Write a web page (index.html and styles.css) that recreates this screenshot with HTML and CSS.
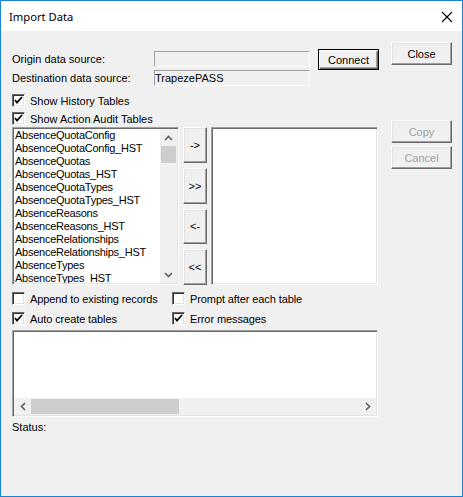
FILE: index.html
```html
<!DOCTYPE html>
<html>
<head>
<meta charset="utf-8">
<link rel="stylesheet" href="styles.css">
</head>
<body>
<div class="window">
  <div class="titlebar">
    <span class="title">Import Data</span>
    <svg class="xicon" width="12" height="12" viewBox="0 0 12 12"><path d="M1 1 L11 11 M11 1 L1 11" stroke="#000" stroke-width="1.1" fill="none"/></svg>
  </div>
  <div class="body">
    <div class="main">
      <div class="row origin">
        <span class="label">Origin data source:</span>
        <div class="field"></div>
        <button class="btn default connect">Connect</button>
      </div>
      <div class="row dest">
        <span class="label">Destination data source:</span>
        <div class="field">TrapezePASS</div>
      </div>
      <div class="check first"><span class="box"><svg width="11" height="11" viewBox="0 0 11 11"><path d="M2 5 L4 7.5 L9 2" stroke="#000" stroke-width="1.8" fill="none"/></svg></span>Show History Tables</div>
      <div class="check second"><span class="box"><svg width="11" height="11" viewBox="0 0 11 11"><path d="M2 5 L4 7.5 L9 2" stroke="#000" stroke-width="1.8" fill="none"/></svg></span>Show Action Audit Tables</div>
      <div class="lists">
        <div class="listbox">
          <ul class="items">
            <li>AbsenceQuotaConfig</li>
            <li>AbsenceQuotaConfig_HST</li>
            <li>AbsenceQuotas</li>
            <li>AbsenceQuotas_HST</li>
            <li>AbsenceQuotaTypes</li>
            <li>AbsenceQuotaTypes_HST</li>
            <li>AbsenceReasons</li>
            <li>AbsenceReasons_HST</li>
            <li>AbsenceRelationships</li>
            <li>AbsenceRelationships_HST</li>
            <li>AbsenceTypes</li>
            <li>AbsenceTypes_HST</li>
          </ul>
          <div class="vscroll">
            <div class="arrow"><svg width="9" height="6" viewBox="0 0 9 6"><path d="M1 5 L4.5 1.5 L8 5" stroke="#606060" stroke-width="1.6" fill="none"/></svg></div>
            <div class="vthumb"></div>
            <div class="vtrack"></div>
            <div class="arrow"><svg width="9" height="6" viewBox="0 0 9 6"><path d="M1 1 L4.5 4.5 L8 1" stroke="#606060" stroke-width="1.6" fill="none"/></svg></div>
          </div>
        </div>
        <div class="movers">
          <button class="btn mover">-&gt;</button>
          <button class="btn mover">&gt;&gt;</button>
          <button class="btn mover">&lt;-</button>
          <button class="btn mover">&lt;&lt;</button>
        </div>
        <div class="listbox"></div>
      </div>
      <div class="opts">
        <div class="check"><span class="box"></span>Append to existing records</div>
        <div class="check"><span class="box"></span>Prompt after each table</div>
        <div class="check"><span class="box"><svg width="11" height="11" viewBox="0 0 11 11"><path d="M2 5 L4 7.5 L9 2" stroke="#000" stroke-width="1.8" fill="none"/></svg></span>Auto create tables</div>
        <div class="check"><span class="box"><svg width="11" height="11" viewBox="0 0 11 11"><path d="M2 5 L4 7.5 L9 2" stroke="#000" stroke-width="1.8" fill="none"/></svg></span>Error messages</div>
      </div>
      <div class="log">
        <div class="logarea"></div>
        <div class="hscroll">
          <div class="harrow"><svg width="6" height="9" viewBox="0 0 6 9"><path d="M5 1 L1.5 4.5 L5 8" stroke="#606060" stroke-width="1.6" fill="none"/></svg></div>
          <div class="hthumb"></div>
          <div class="htrack"></div>
          <div class="harrow"><svg width="6" height="9" viewBox="0 0 6 9"><path d="M1 1 L4.5 4.5 L1 8" stroke="#606060" stroke-width="1.6" fill="none"/></svg></div>
        </div>
      </div>
      <div class="status">Status:</div>
    </div>
    <div class="side">
      <button class="btn sidebtn close">Close</button>
      <button class="btn sidebtn disabled copy">Copy</button>
      <button class="btn sidebtn disabled cancel">Cancel</button>
    </div>
  </div>
</div>
</body>
</html>
```
FILE: styles.css
```css
* { box-sizing: border-box; }
html, body { margin: 0; padding: 0; }
body {
  width: 463px;
  height: 497px;
  overflow: hidden;
  font-family: "Liberation Sans", Arial, sans-serif;
  font-size: 11px;
  color: #000;
}
.window {
  width: 463px;
  height: 497px;
  border: 1px solid #1883d7;
  background: #f0f0f0;
  display: flex;
  flex-direction: column;
}
.titlebar {
  height: 30px;
  background: #fff;
  display: flex;
  align-items: center;
  padding-left: 8px;
  padding-right: 9px;
  flex: none;
}
.title {
  font-family: "Noto Sans", "Open Sans", sans-serif;
  font-size: 11.2px;
  flex: 1;
  padding-top: 1px;
}
.xicon { display: block; margin-top: 2px; }
.body {
  flex: 1;
  display: flex;
  padding-left: 11px;
}
.main {
  width: 367px;
  padding-top: 18px;
  display: flex;
  flex-direction: column;
}
.row {
  display: flex;
  align-items: flex-start;
}
.row.origin { height: 21px; }
.row.dest { height: 16px; }
.label {
  width: 142px;
  line-height: 16px;
}
.row.origin .label { margin-top: 2px; }
.field {
  width: 156px;
  height: 16px;
  border-top: 1px solid #a0a0a0;
  border-left: 1px solid #a0a0a0;
  border-right: 1px solid #fff;
  border-bottom: 1px solid #fff;
  line-height: 14px;
  padding-left: 0px;
}
.row.origin .field { margin-top: 2px; }
.btn {
  font-family: "Liberation Sans", Arial, sans-serif;
  font-size: 11px;
  color: #000;
  background: #f0f0f0;
  padding: 0;
  margin: 0;
  border-top: 1px solid #fff;
  border-left: 1px solid #fff;
  border-right: 1px solid #696969;
  border-bottom: 1px solid #696969;
  box-shadow: inset -1px -1px 0 #a0a0a0, inset 1px 1px 0 #e3e3e3;
  display: flex;
  align-items: center;
  justify-content: center;
}
.btn.default {
  border: 1px solid #000;
  box-shadow: inset 1px 1px 0 #fff, inset -1px -1px 0 #696969, inset -2px -2px 0 #a0a0a0;
}
.connect {
  margin-left: 8px;
  width: 61px;
  height: 21px;
  padding-top: 1px;
}
.check {
  display: flex;
  align-items: center;
  height: 13px;
}
.check.first { margin-top: 8px; }
.check.second { margin-top: 5px; }
.box {
  width: 13px;
  height: 13px;
  background: #fff;
  border-top: 1px solid #696969;
  border-left: 1px solid #696969;
  border-right: 1px solid #fff;
  border-bottom: 1px solid #fff;
  box-shadow: inset 1px 1px 0 #333, inset -1px -1px 0 #e3e3e3;
  margin-right: 5px;
  display: flex;
  align-items: center;
  justify-content: center;
  flex: none;
}
.box svg { display: block; }
.lists {
  display: flex;
  gap: 4px;
  margin-top: 2px;
  height: 158px;
  width: 366px;
}
.listbox {
  width: 167px;
  height: 158px;
  background: #fff;
  border-top: 1px solid #a0a0a0;
  border-left: 1px solid #a0a0a0;
  border-right: 1px solid #fff;
  border-bottom: 1px solid #fff;
  box-shadow: inset 1px 1px 0 #696969, inset -1px -1px 0 #e3e3e3;
  padding: 1px;
  display: flex;
  overflow: hidden;
}
.items {
  list-style: none;
  margin: 0;
  padding: 0 0 0 1px;
  flex: 1;
  overflow: hidden;
}
.items li {
  height: 13px;
  line-height: 13px;
  white-space: nowrap;
  letter-spacing: -0.25px;
}
.vscroll {
  width: 17px;
  background: #f0f0f0;
  display: flex;
  flex-direction: column;
  flex: none;
}
.arrow {
  height: 17px;
  display: flex;
  align-items: center;
  justify-content: center;
  flex: none;
}
.vthumb {
  height: 17px;
  margin: 0 1px;
  background: #cdcdcd;
  flex: none;
}
.vtrack { flex: 1; }
.movers {
  width: 24px;
  display: flex;
  flex-direction: column;
  gap: 5px;
}
.mover {
  width: 24px;
  height: 36px;
}
.opts {
  display: grid;
  grid-template-columns: 160px 1fr;
  row-gap: 7px;
  margin-top: 7px;
}
.opts .check { height: 13px; letter-spacing: -0.1px; }
.log {
  margin-top: 5px;
  width: 366px;
  height: 87px;
  background: #fff;
  border-top: 1px solid #a0a0a0;
  border-left: 1px solid #a0a0a0;
  border-right: 1px solid #fff;
  border-bottom: 1px solid #fff;
  box-shadow: inset 1px 1px 0 #696969, inset -1px -1px 0 #e3e3e3;
  padding: 1px;
  display: flex;
  flex-direction: column;
}
.logarea { flex: 1; }
.hscroll {
  height: 17px;
  display: flex;
  background: #f0f0f0;
  flex: none;
}
.harrow {
  width: 17px;
  display: flex;
  align-items: center;
  justify-content: center;
  flex: none;
}
.hthumb {
  width: 148px;
  margin: 1px 0;
  background: #cdcdcd;
  flex: none;
}
.htrack { flex: 1; }
.status {
  margin-top: 4px;
  line-height: 13px;
}
.side {
  margin-left: 12px;
  width: 61px;
  padding-top: 11px;
  display: flex;
  flex-direction: column;
}
.sidebtn {
  width: 61px;
  height: 23px;
}
.copy { margin-top: 55px; }
.cancel { margin-top: 3px; }
.btn.disabled { color: #a0a0a0; }
```
